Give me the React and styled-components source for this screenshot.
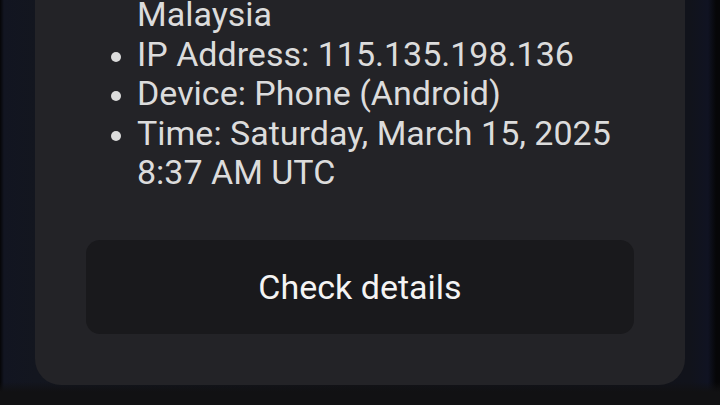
import styled, { createGlobalStyle } from "styled-components";

const GlobalStyle = createGlobalStyle`
  html, body {
    margin: 0;
    padding: 0;
    height: 100%;
    overflow: hidden;
  }

  body {
    background: linear-gradient(
      90deg,
      #050507 0px,
      #121521 4px,
      #13161f 34px,
      #121318 50%,
      #11131b 690px,
      #101322 708px,
      #060608 716px
    );
    font-family: Roboto, "Noto Sans", "Liberation Sans", sans-serif;
  }
`;

const Screen = styled.div`
  width: 720px;
  height: 405px;
  display: flex;
  flex-direction: column;
  align-items: center;
  overflow: hidden;
  background: linear-gradient(180deg, transparent 382px, #111113 392px);
`;

const Card = styled.section`
  width: 650px;
  box-sizing: border-box;
  margin-top: -39px;
  padding: 34px 51px 51px;
  background: #232327;
  border-radius: 0 0 26px 26px;
  display: flex;
  flex-direction: column;
  gap: 47px;
`;

const DetailList = styled.ul`
  margin: 0;
  padding: 0 0 0 51px;
  list-style: disc;
  color: #dcdcdc;
  font-size: 34px;
  line-height: 39.5px;

  li::marker {
    color: #dcdcdc;
    font-size: 31px;
  }
`;

const Detail = styled.li`
  list-style: ${(p) => (p.$continued ? "none" : "disc")};
`;

const ActionButton = styled.button`
  height: 94px;
  width: 100%;
  border: none;
  border-radius: 14px;
  background: #19191c;
  color: #f4f4f4;
  font-family: Roboto, "Noto Sans", "Liberation Sans", sans-serif;
  font-size: 34px;
  cursor: pointer;
`;

const details = [
  { text: "Malaysia", continued: true },
  { text: "IP Address: 115.135.198.136" },
  { text: "Device: Phone (Android)" },
  { text: "Time: Saturday, March 15, 2025 8:37 AM UTC" },
];

export default function App() {
  return (
    <>
      <GlobalStyle />
      <Screen>
        <Card>
          <DetailList>
            {details.map((d) => (
              <Detail key={d.text} $continued={d.continued}>
                {d.text}
              </Detail>
            ))}
          </DetailList>
          <ActionButton>Check details</ActionButton>
        </Card>
      </Screen>
    </>
  );
}
